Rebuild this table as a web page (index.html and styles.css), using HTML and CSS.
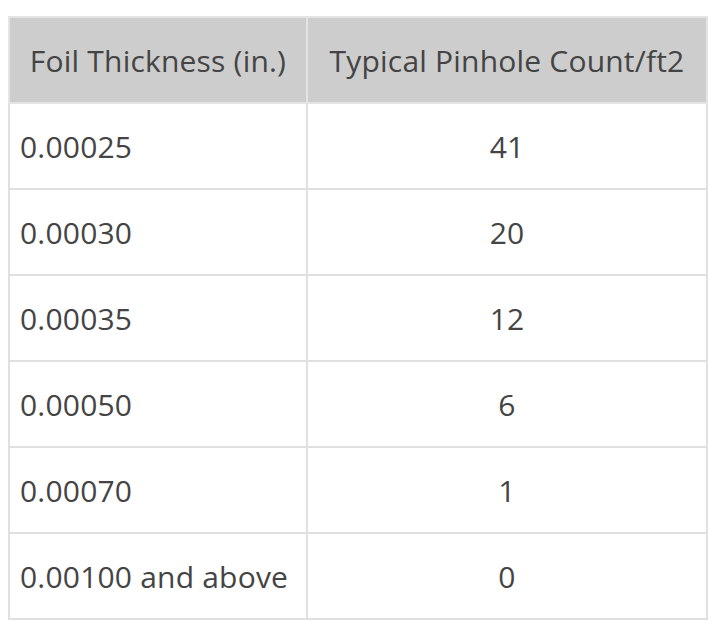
FILE: index.html
```html
<!DOCTYPE html>
<html>
<head>
<meta charset="utf-8">
<link rel="stylesheet" href="styles.css">
</head>
<body>
<table class="data">
  <thead>
    <tr><th class="c1">Foil Thickness (in.)</th><th class="c2">Typical Pinhole Count/ft2</th></tr>
  </thead>
  <tbody>
    <tr><td class="c1">0.00025</td><td class="c2">41</td></tr>
    <tr><td class="c1">0.00030</td><td class="c2">20</td></tr>
    <tr><td class="c1">0.00035</td><td class="c2">12</td></tr>
    <tr><td class="c1">0.00050</td><td class="c2">6</td></tr>
    <tr><td class="c1">0.00070</td><td class="c2">1</td></tr>
    <tr><td class="c1">0.00100 and above</td><td class="c2">0</td></tr>
  </tbody>
</table>
</body>
</html>
```
FILE: styles.css
```css
html, body { margin: 0; padding: 0; background: #fff; }
body { padding: 16px 10px 0 8px; }
.data {
  border-collapse: collapse;
  width: 700px;
  font-family: "Open Sans", Lato, sans-serif;
  font-size: 30px;
  letter-spacing: 0.2px;
  color: #444;
  border: 2px solid #e0e0e0;
}
.data th, .data td {
  border: 2px solid #e0e0e0;
  height: 86px;
  padding: 0 10px;
  box-sizing: border-box;
  font-weight: normal;
  vertical-align: middle;
}
.data th { background: #cdcdcd; text-align: center; border-color: #e4e4e4; }
.data .c1 { width: 298px; }
.data td.c1 { text-align: left; }
.data td.c2 { text-align: center; }
```
